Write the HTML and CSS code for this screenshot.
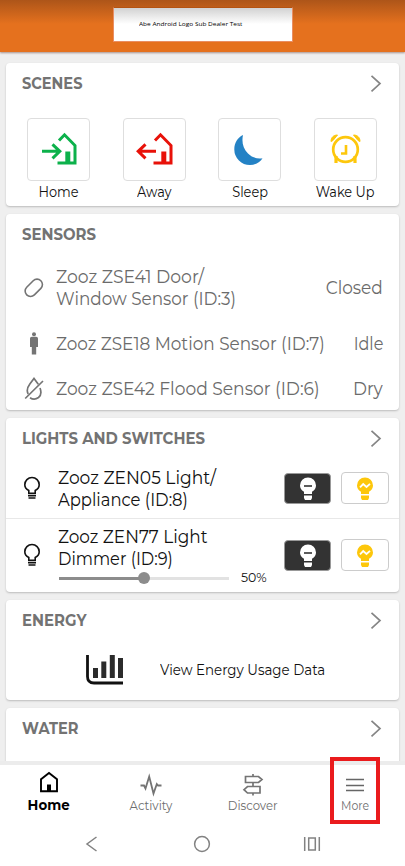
FILE: index.html
```html
<!DOCTYPE html>
<html lang="en">
<head>
<meta charset="utf-8">
<title>Home</title>
<link rel="stylesheet" href="styles.css">
</head>
<body>
<svg class="defs" width="0" height="0">
  <symbol id="chevron" viewBox="0 0 12 18"><path d="M1.5 .8 10 8.600 1.5 16.400" fill="none" stroke="#858585" stroke-width="1.700"/></symbol>
  <symbol id="bulb" viewBox="0 0 18 24"><path d="M5.800 17.400v-2.900C3.100 13.100 1.800 11.100 1.800 8.700a7.200 7.200 0 0 1 14.400 0c0 2.400-1.300 4.400-4 5.800v2.900z" fill="none" stroke="#111" stroke-width="1.600"/><path d="M5 19.800h8M5.500 22h7" stroke="#111" stroke-width="1.500"/></symbol>
  <symbol id="bulb-fill" viewBox="0 0 18 24"><path d="M5 17v-2.300C2.300 13.400 1 11 1 8.500a8 8 0 0 1 16 0c0 2.500-1.300 4.900-4 6.200V17zM5 18.500h8v2.500L12 23H6L5 21z" fill="currentColor"/></symbol>
</svg>
<div class="app">
  <header class="top"><div class="logo"><span>Abe Android Logo Sub Dealer Test</span></div></header>
  <main class="cards">
    <section class="card scenes">
      <div class="head"><h2 class="t-scenes">SCENES</h2><svg class="chev"><use href="#chevron"/></svg></div>
      <div class="tiles">
        <div class="scene"><div class="tile"><svg viewBox="0 0 63 63"><g fill="none" stroke="#0cb14b" stroke-width="3"><path d="M32 22.500 37.500 16.800 48 27.500V45H30.500"/><path d="M15 33.300H32M25.500 26.300 32.800 33.300 25.500 40.300"/></g><path d="M38.300 33.500h5V45h-5z" fill="#0cb14b"/></svg></div><span>Home</span></div>
        <div class="scene"><div class="tile"><svg viewBox="0 0 63 63"><g fill="none" stroke="#e81109" stroke-width="3"><path d="M32 22.500 37.500 16.800 48 27.500V45H30.500"/><path d="M33 33.300H16M22.500 26.300 15.200 33.300 22.500 40.300"/></g><path d="M38.300 33.500h5V45h-5z" fill="#e81109"/></svg></div><span>Away</span></div>
        <div class="scene"><div class="tile"><svg viewBox="0 0 63 63"><path d="M25 17C19.500 19.500 16.300 25 16.300 31.500A15.600 15.600 0 0 0 32 47C37.500 47 42.500 44 44.500 40.200 39 41 34 39.500 30 35.500 25 30.500 23.500 24 25 17z" fill="#2482c5"/></svg></div><span>Sleep</span></div>
        <div class="scene"><div class="tile"><svg viewBox="0 0 63 63"><g fill="none" stroke="#fdc70c"><circle cx="31.500" cy="31.500" r="12.300" stroke-width="2.700"/><path d="M32 27v8.500h-5" stroke-width="2.600"/><path d="M22 38v7M41 38v7" stroke-width="3.200"/></g><path d="M17 23.500c0-4 2.500-6.500 6.500-6.500L19 22.500zM46 23.500c0-4-2.500-6.500-6.500-6.500L44 22.500z" fill="#fdc70c" stroke="#fdc70c"/></svg></div><span>Wake Up</span></div>
      </div>
    </section>
    <section class="card sensors">
      <div class="head"><h2 class="t-sensors">SENSORS</h2></div>
      <div class="sensor-list">
        <div class="sensor"><svg viewBox="0 0 22 24"><rect x="1" y="6.300" width="20" height="10.800" rx="5.400" transform="rotate(-45 11 12)" fill="none" stroke="#747474" stroke-width="1.600"/></svg><p><span class="s1">Zooz ZSE41 Door/</span><br><span class="s2">Window Sensor (ID:3)</span></p><span class="state">Closed</span></div>
        <div class="sensor"><svg viewBox="0 0 22 24"><circle cx="11" cy="2.300" r="2" fill="#747474"/><path d="M9 4.800h4c1.300 0 2 .8 2 2V15h-1.800v7.500H8.800V15H7V6.800c0-1.200.7-2 2-2z" fill="#747474"/></svg><p><span class="s3">Zooz ZSE18 Motion Sensor (ID:7)</span></p><span class="state idle">Idle</span></div>
        <div class="sensor"><svg viewBox="0 0 22 24"><path d="M5.200 17C3.200 13.500 5 9.500 7 6.800L11 1.500l4.300 5.700M17 11c1.600 4.200 1 7.500-1.500 9.500-2.500 1.900-6 1.900-8.500.2M2.200 21.500 20 4" fill="none" stroke="#747474" stroke-width="1.700"/></svg><p><span class="s4">Zooz ZSE42 Flood Sensor (ID:6)</span></p><span class="state">Dry</span></div>
      </div>
    </section>
    <section class="card lights">
      <div class="head"><h2 class="t-lights">LIGHTS AND SWITCHES</h2><svg class="chev"><use href="#chevron"/></svg></div>
      <div class="light first">
        <svg class="bulb"><use href="#bulb"/></svg>
        <div class="name"><p><span class="n1">Zooz ZEN05 Light/</span><br><span class="n2">Appliance (ID:8)</span></p></div>
        <div class="btn off"><svg viewBox="0 0 18 24"><use href="#bulb-fill"/><path d="M5 9h8" stroke="#333" stroke-width="1.600"/></svg></div>
        <div class="btn on"><svg viewBox="0 0 18 24"><use href="#bulb-fill"/><path d="M4 10.300 7.200 7l3.300 3L14 6.800" fill="none" stroke="#fff" stroke-width="1.800"/></svg></div>
      </div>
      <div class="light second">
        <svg class="bulb"><use href="#bulb"/></svg>
        <div class="name"><p><span class="n3">Zooz ZEN77 Light</span><br><span class="n4">Dimmer (ID:9)</span></p>
          <div class="dim"><div class="track"><div class="fill"></div><div class="thumb"></div></div><span>50%</span></div></div>
        <div class="btn off"><svg viewBox="0 0 18 24"><use href="#bulb-fill"/><path d="M5 9h8" stroke="#333" stroke-width="1.600"/></svg></div>
        <div class="btn on"><svg viewBox="0 0 18 24"><use href="#bulb-fill"/><path d="M4 10.300 7.200 7l3.300 3L14 6.800" fill="none" stroke="#fff" stroke-width="1.800"/></svg></div>
      </div>
    </section>
    <section class="card energy">
      <div class="head"><h2 class="t-energy">ENERGY</h2><svg class="chev"><use href="#chevron"/></svg></div>
      <div class="usage"><svg viewBox="0 0 38 32"><path d="M2.500 1v21.500q0 6.500 6.500 6.500H38" fill="none" stroke="#111" stroke-width="2.800"/><path d="M8 14h5v10H8zM16.300 7.500h5V24h-5zM24.800 1h5v23h-5zM33 4h5v20h-5z" fill="#2b2b2b"/></svg><span>View Energy Usage Data</span></div>
    </section>
    <section class="card water">
      <div class="head"><h2 class="t-water">WATER</h2><svg class="chev"><use href="#chevron"/></svg></div>
    </section>
  </main>
  <nav class="tabs">
    <div class="tab active"><svg viewBox="0 0 24 24"><path d="M4 8.300 12 2l8 6.300v12H4z" fill="none" stroke="#000" stroke-width="1.900"/><path d="M10 13.500h4v7h-4z"/></svg><span>Home</span></div>
    <div class="tab"><svg viewBox="0 0 24 24"><path d="M1.500 12.500H5L6.500 15.500 10.200 3.500 14.500 20.500 17.800 11 19 12.500h3.500" fill="none" stroke="#747474" stroke-width="1.800"/></svg><span>Activity</span></div>
    <div class="tab"><svg viewBox="0 0 24 24"><path d="M4.500 3.500h13L21 6.500 17.500 9.500h-13zM19 13.500H6.500L3 16.700 6.500 20H19zM12 1v2.500M12 9.500v4M12 20v2.500" fill="none" stroke="#747474" stroke-width="1.700"/></svg><span>Discover</span></div>
    <div class="tab"><svg viewBox="0 0 24 24"><path d="M3 6.500h18M3 12.500h18M3 17.500h18" stroke="#666" stroke-width="1.400"/></svg><span class="m">More</span><div class="mark"></div></div>
  </nav>
  <footer class="system">
    <svg viewBox="0 0 18 18"><path d="M13.500 2 4 9l9.500 7" fill="none" stroke="#828282" stroke-width="1.500"/></svg>
    <svg viewBox="0 0 18 18"><circle cx="9" cy="9" r="7.400" fill="none" stroke="#828282" stroke-width="1.500"/></svg>
    <svg viewBox="0 0 18 18"><path d="M1.700 2v14M16.300 2v14M5.700 3h6.600v12H5.700z" fill="none" stroke="#828282" stroke-width="1.500"/></svg>
  </footer>
</div>
</body>
</html>
```
FILE: styles.css
```css
* { box-sizing: border-box; }
body { margin: 0; font-family: Montserrat, Inter, sans-serif; background: #fff; color: #111; }
h2, p { margin: 0; }
svg { display: block; flex: none; }
.defs { position: absolute; }
span { white-space: nowrap; }
.app { width: 405px; height: 866px; display: flex; flex-direction: column; overflow: hidden; }
.top { height: 52px; flex: none; display: flex; justify-content: center; padding-top: 7px; background: linear-gradient(#ad5519, #e5711e 24px); box-shadow: 0 1px 2px #a8908a; z-index: 1; }
.logo { width: 180px; height: 35px; padding: 10px 0 0 25px; background: linear-gradient(#d2d2d2, #fff 16px); border: 1px solid #e98e63; border-top-color: #b45312; }
.logo span { display: block; font: 500 6px/12px "Open Sans", sans-serif; color: #000; width: max-content; transform: scaleX(1.085); transform-origin: 0 0; }
.cards { height: 709px; flex: none; overflow: hidden; padding: 11px 6px 0; background: #efefef; display: flex; flex-direction: column; gap: 8px; }
.card { flex: none; background: #fff; border-radius: 4px; box-shadow: 0 1px 2px #bbb; }
.scenes { height: 143px; }
.sensors { height: 196px; }
.lights { height: 174px; }
.energy { height: 100px; }
.water { height: 70px; }
.head { height: 41px; padding: 0 17px 0 16px; display: flex; justify-content: space-between; align-items: center; }
h2 { font-size: 16px; line-height: 20px; font-weight: 700; color: #737373; transform: scaleX(.93); transform-origin: 0 50%; }
.t-scenes, .t-water { transform: scaleX(.91); }
.chev { width: 12px; height: 18px; }
.tiles { display: flex; justify-content: space-between; padding: 14px 22px 0 21px; }
.scene { width: 63px; display: flex; flex-direction: column; align-items: center; }
.scene .tile { width: 63px; height: 63px; border: 1px solid #dedede; border-radius: 4px; }
.tile svg { width: 63px; height: 63px; margin: -1px; }
.scene span { font-size: 14.5px; line-height: 20px; margin-top: 1px; transform: scaleX(.89); }
.sensor-list { padding: 11px 16px 0 17px; display: flex; flex-direction: column; gap: 23px; color: #6b6b6b; }
.sensor { display: flex; align-items: center; font-size: 18px; line-height: 22px; }
.sensor svg { width: 22px; height: 24px; margin: -1px 11px -1px 0; }
.sensor p { width: 260px; }
.sensor p span, .name p span { display: inline-block; vertical-align: top; transform-origin: 0 50%; }
.s1 { transform: scaleX(.957); }
.s2 { transform: scaleX(.934); }
.s3 { transform: scaleX(.937); }
.s4 { transform: scaleX(.95); }
.n1 { transform: scaleX(.95); }
.n2 { transform: scaleX(.91); }
.n3 { transform: scaleX(.939); }
.n4 { transform: scaleX(.9); }
.state { margin-left: auto; transform: scaleX(.94); transform-origin: 100% 50%; }
.idle { transform: scaleX(.89); }
.light { display: flex; padding: 8px 10px 0 17px; }
.light.first { height: 60px; border-bottom: 1px solid #e8e8e8; }
.light.second { padding-top: 7px; }
.bulb { width: 18px; height: 24px; margin: 9px 17px 0 0; }
.second .bulb { margin-top: 17px; }
.name { width: 226px; font-size: 18px; line-height: 22px; flex: none; }
.btn { height: 32px; width: 48px; margin-top: 5px; border-radius: 4px; display: flex; align-items: center; justify-content: center; }
.second .btn { margin-top: 13px; }
.btn svg { width: 18px; height: 24px; }
.on svg { margin-top: 1px; }
.off { width: 47px; height: 31px; margin-top: 6px; color: #fff; background: #333; border: 1px solid #999; }
.second .off { margin-top: 14px; }
.on { margin-left: 10px; color: #fdc70c; border: 1px solid #ccc; }
.dim { display: flex; align-items: center; height: 16px; }
.track { position: relative; width: 170px; height: 3px; margin-left: 1px; background: #e2e2e2; }
.fill { width: 50%; height: 3px; background: #8c8c8c; }
.thumb { position: absolute; left: 79px; top: -4.500px; width: 12px; height: 12px; border-radius: 50%; background: #8c8c8c; }
.dim span { margin-left: 12px; font-size: 12.5px; line-height: 16px; }
.usage { display: flex; align-items: center; padding: 12px 0 0 79px; }
.usage svg { width: 38px; height: 32px; margin-top: 1px; }
.usage span { margin-left: 37px; font-size: 14.5px; line-height: 20px; transform: scaleX(.925); transform-origin: 0 50%; }
.tabs { height: 62px; flex: none; padding: 6px 0 0; border-top: 4px solid #ececec; display: grid; grid-template-columns: repeat(4, 102px); margin-left: -2px; }
.tab { position: relative; display: flex; flex-direction: column; align-items: center; color: #6d6d6d; }
.tab svg { width: 24px; height: 24px; }
.tab:not(.active) svg { margin-top: 2px; }
.tab span { font-size: 12.5px; line-height: 16px; margin-top: 1px; transform: scaleX(.93); }
.tab .m { transform: scaleX(.87); }
.tab.active { color: #000; }
.tab.active span { font-size: 15px; font-weight: 700; margin-top: 2px; transform: scaleX(.89); }
.mark { position: absolute; left: 26px; top: -14px; width: 50px; height: 67px; border: 4px solid #ea1b1d; }
.system { height: 43px; display: grid; grid-template-columns: repeat(3, 110px); justify-items: center; padding: 12px 0 0 37px; }
.system svg { width: 18px; height: 18px; }
```
